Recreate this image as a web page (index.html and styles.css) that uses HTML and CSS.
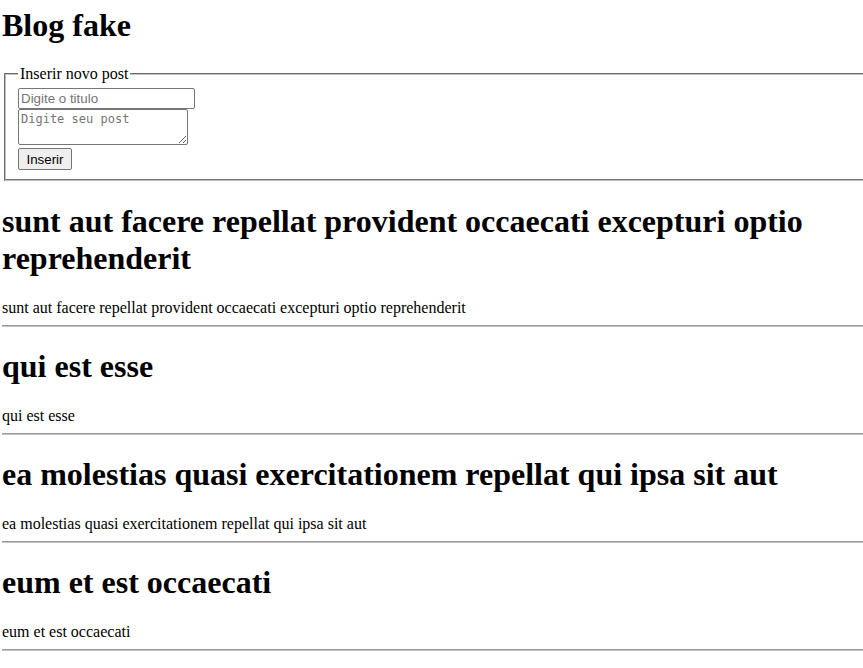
FILE: index.html
```html
<!DOCTYPE html>
<html lang="pt">
<head>
<meta charset="utf-8">
<title>Blog fake</title>
<link rel="stylesheet" href="styles.css">
</head>
<body>
<div class="app">
  <h1 class="site-title">Blog fake</h1>
  <form class="post-form">
    <fieldset class="form-box">
      <legend class="form-legend">Inserir novo post</legend>
      <div class="form-fields">
        <input class="field-title" type="text" placeholder="Digite o titulo">
        <textarea class="field-body" placeholder="Digite seu post"></textarea>
        <button class="btn-insert" type="button">Inserir</button>
      </div>
    </fieldset>
  </form>
  <div class="posts">
    <article class="post">
      <h2 class="post-title">sunt aut facere repellat provident occaecati excepturi optio reprehenderit</h2>
      <p class="post-body">sunt aut facere repellat provident occaecati excepturi optio reprehenderit</p>
      <hr class="post-sep">
    </article>
    <article class="post">
      <h2 class="post-title">qui est esse</h2>
      <p class="post-body">qui est esse</p>
      <hr class="post-sep">
    </article>
    <article class="post">
      <h2 class="post-title">ea molestias quasi exercitationem repellat qui ipsa sit aut</h2>
      <p class="post-body">ea molestias quasi exercitationem repellat qui ipsa sit aut</p>
      <hr class="post-sep">
    </article>
    <article class="post">
      <h2 class="post-title">eum et est occaecati</h2>
      <p class="post-body">eum et est occaecati</p>
      <hr class="post-sep">
    </article>
  </div>
</div>
</body>
</html>
```

FILE: styles.css
```css
html {
  overflow: hidden;
}

body {
  margin: 0 -10px 0 2px;
  font-family: "Liberation Serif", "Times New Roman", serif;
  font-size: 16px;
  color: #000;
  background: #fff;
}

.site-title {
  font-size: 32px;
  font-weight: bold;
  margin: 7px 0 21.44px;
}

.post-form {
  margin: 0;
  padding-bottom: 1px;
}

.form-box {
  margin: 0 2px;
  padding: 4.6px 12px 9px;
  border: 2px groove rgb(192, 192, 192);
}

.form-legend {
  padding: 0 2px;
}

.form-fields {
  display: flex;
  flex-direction: column;
  align-items: flex-start;
}

.field-title {
  box-sizing: border-box;
  width: 177px;
  height: 21px;
  margin: 0;
  padding: 1px 2px;
  border: 1px solid #767676;
  border-radius: 2px;
  font-family: "Liberation Sans", Arial, sans-serif;
  font-size: 13.33px;
}

.field-title::placeholder {
  color: #757575;
}

.field-body {
  box-sizing: border-box;
  width: 170px;
  height: 36px;
  margin: 0;
  padding: 2px;
  border: 1px solid #767676;
  border-radius: 2px;
  font-family: "DejaVu Sans Mono", "Liberation Mono", monospace;
  font-size: 12px;
}

.field-body::placeholder {
  color: #757575;
}

.btn-insert {
  box-sizing: border-box;
  width: 54px;
  height: 22px;
  margin: 3px 0 0;
  padding: 1px 6px;
  background: #efefef;
  border: 1px solid #767676;
  border-radius: 2px;
  font-family: "Liberation Sans", Arial, sans-serif;
  font-size: 13.33px;
  color: #000;
}

.post-title {
  font-size: 32px;
  font-weight: bold;
  margin: 21.44px 0;
}

.post-body {
  margin: 0;
}

.post-sep {
  margin: 8px 0;
  border: 0;
  border-top: 1px solid #9a9a9a;
  border-bottom: 1px solid #c4c4c4;
}
```
